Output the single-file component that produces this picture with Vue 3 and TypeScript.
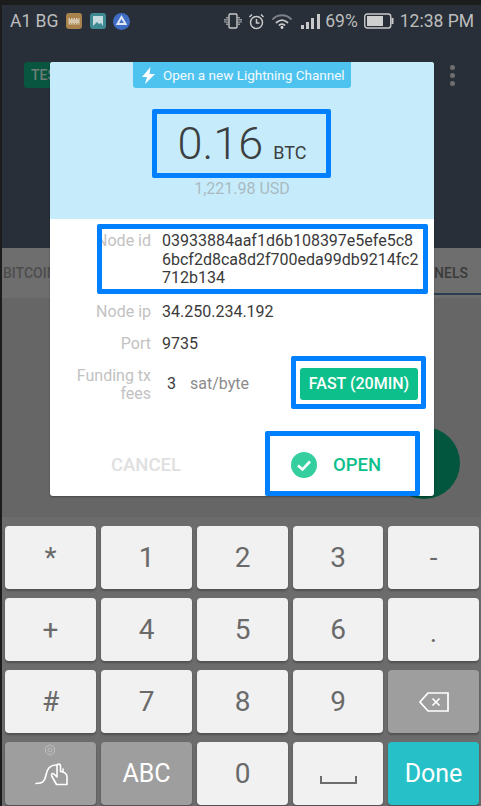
<script setup lang="ts">
interface Key { label: string; kind: 'light' | 'dark' | 'done' }
const digitRows: Key[] = ['*', '1', '2', '3', '-', '+', '4', '5', '6', '.', '#', '7', '8', '9'].map((label) => ({ label, kind: 'light' }));
</script>

<template>
  <div class="phone">
    <div class="topline"></div>
    <div class="screen">
      <div class="dark-head">
        <div class="status">
          <span class="carrier">A1 BG</span>
          <svg class="nicon" width="16" height="16" viewBox="0 0 16 16"><rect width="16" height="16" rx="3" fill="#a9824b"/><rect x="2.500" y="5" width="11" height="6.500" fill="#d8c9ae"/><path d="M4.500 5v1.500M7 5v1.500M9.500 5v1.500M12 5v1.500M4.500 10v1.500M7 10v1.500M9.500 10v1.500M12 10v1.500" stroke="#a9824b"/></svg>
          <svg class="nicon n2" width="16" height="16" viewBox="0 0 16 16"><rect width="16" height="16" rx="3" fill="#3f8a92"/><rect x="3" y="3" width="10" height="10" fill="#c4dcdf"/><path d="M3 13l4-4 2 2 2-1 2 3z" fill="#3f8a92"/></svg>
          <svg class="nicon n3" width="17" height="17" viewBox="0 0 17 17"><circle cx="8.500" cy="8.500" r="8.500" fill="#3f6dc4"/><path d="M8.500 4L12.500 11H4.500z" fill="none" stroke="#dfe6f5" stroke-width="2"/></svg>
          <span class="spacer"></span>
          <svg width="18" height="16" viewBox="0 0 18 16" fill="none" stroke="#c9c9c9" stroke-width="1.400"><rect x="5" y="1" width="8" height="14" rx="1.200"/><path d="M3 4v8M1 6v4M15 4v8M17 6v4" stroke-dasharray="1.400 .8"/></svg>
          <svg class="si" width="17" height="17" viewBox="0 0 17 17" fill="none" stroke="#c9c9c9" stroke-width="1.500"><circle cx="8.500" cy="9.500" r="6"/><path d="M8.500 6v4h3M1.500 4L4 1.500M15.500 4L13 1.500"/></svg>
          <svg class="si2" width="22" height="16" viewBox="0 0 22 16" fill="none" stroke-linecap="round"><path d="M2 6c5-5 13-5 18 0" stroke="#7c8087" stroke-width="1.800"/><path d="M5.500 9.500c3.500-3 7.500-3 11 0" stroke="#c9c9c9" stroke-width="1.800"/><path d="M8.500 12c1.500-1 3.500-1 5 0" stroke="#c9c9c9" stroke-width="1.800"/><circle cx="11" cy="14.500" r="1.400" fill="#e0e0e0"/></svg>
          <svg class="si3" width="19" height="16" viewBox="0 0 19 16" fill="#c9c9c9"><rect x="0" y="12" width="3" height="4"/><rect x="5" y="9" width="3" height="7"/><rect x="10" y="5" width="3" height="11"/><rect x="16" y="1" width="3" height="15"/></svg>
          <span class="pct">69%</span>
          <svg class="si4" width="30" height="16" viewBox="0 0 30 16"><rect x=".75" y="1" width="26" height="14" rx="2.500" fill="none" stroke="#c9c9c9" stroke-width="1.400"/><rect x="3" y="3" width="16" height="10" fill="#cfcfcf"/><rect x="27.500" y="5" width="2" height="6" fill="#c9c9c9"/></svg>
          <span class="time">12:38 PM</span>
        </div>
        <div class="appbar">
          <span class="test">TESTNET</span>
          <span class="dots"><i></i><i></i><i></i></span>
        </div>
      </div>
      <div class="tabs">
        <span class="tab-l">BITCOIN</span>
        <span class="tab-r">CHANNELS</span>
      </div>
      <div class="content"></div>
      <div class="fab"></div>
      <div class="keyboard">
        <button v-for="k in digitRows" :key="k.label" class="key" :class="[k.kind, { low: k.label === '.' }]">{{ k.label }}</button>
        <button class="key dark" aria-label="backspace">
          <svg width="30" height="20" viewBox="0 0 30 20" fill="none" stroke="#fff" stroke-width="1.700"><path d="M9 1h20v18H9L1 10z"/><path d="M13.500 6.500l7 7M20.500 6.500l-7 7"/></svg>
        </button>
        <button class="key dark gesture" aria-label="gesture">
          <svg class="gear" width="12" height="12" viewBox="0 0 12 12" fill="none" stroke="#bdbdbd" stroke-width="1"><path d="M6 .8l4.500 2.600v5.200L6 11.200 1.500 8.600V3.400z"/><circle cx="6" cy="6" r="2"/></svg>
          <svg class="hand" width="33" height="24" viewBox="0 0 33 24" fill="none" stroke="#fff" stroke-width="1.600" stroke-linecap="round" stroke-linejoin="round"><path d="M1 21.500C8 21.500 10 19 11 13S15 2.500 22 3"/><path d="M21.500 22.500L17 14.500C15.500 12 17.500 10.500 19.500 12.500L22 15V4C22 1.500 25.500 1.500 25.500 4V9.500C29.500 10 32 12 32 15V22.500Z"/><path d="M28 10v-3"/></svg>
        </button>
        <button class="key dark abc">ABC</button>
        <button class="key light">0</button>
        <button class="key light" aria-label="space">
          <svg class="space" width="37" height="8" viewBox="0 0 37 8" fill="none" stroke="#6d6d6d" stroke-width="2"><path d="M1 0v7h35V0"/></svg>
        </button>
        <button class="key done">Done</button>
      </div>
    </div>

    <div class="modal">
      <div class="m-head">
        <div class="pill">
          <svg width="13" height="17" viewBox="0 0 13 17" fill="#fff"><path d="M8.500 0L0 10h5l-2 7 10-10H7.500z"/></svg>
          <span>Open a new Lightning Channel</span>
        </div>
        <div class="amount"><span class="num">0.16</span><span class="unit">BTC</span></div>
        <div class="usd">1,221.98 USD</div>
      </div>
      <div class="m-body">
        <div class="row node">
          <span class="lbl">Node id</span>
          <span class="val">03933884aaf1d6b108397e5efe5c8<br>6bcf2d8ca8d2f700eda99db9214fc2<br>712b134</span>
        </div>
        <div class="row ip"><span class="lbl">Node ip</span><span class="val">34.250.234.192</span></div>
        <div class="row port"><span class="lbl">Port</span><span class="val">9735</span></div>
        <div class="row fee">
          <span class="lbl">Funding tx<br>fees</span>
          <span class="feeval">3</span>
          <span class="feeunit">sat/byte</span>
          <span class="fast">FAST (20MIN)</span>
        </div>
      </div>
      <div class="m-foot">
        <span class="cancel">CANCEL</span>
        <span class="open">
          <svg width="26" height="26" viewBox="0 0 26 26"><circle cx="13" cy="13" r="13" fill="#35cf9f"/><path d="M7 13.500l4.500 4L19 9.500" fill="none" stroke="#fff" stroke-width="2.600"/></svg>
          <span>OPEN</span>
        </span>
      </div>
    </div>

    <div class="mark m-amount"></div>
    <div class="mark m-node"></div>
    <div class="mark m-fast"></div>
    <div class="mark m-open"></div>
  </div>
</template>

<style>
html, body { margin: 0; padding: 0; background: #1c1c1c; }
</style>

<style scoped>
.phone {
  position: relative;
  width: 481px;
  height: 806px;
  overflow: hidden;
  background: #1c1c1c;
  font-family: Roboto, "Liberation Sans", sans-serif;
}
.topline { height: 5px; background: #1c1c1c; }
.screen {
  position: relative;
  margin-left: 2px;
  height: 801px;
  display: flex;
  flex-direction: column;
  background: #666;
  overflow: hidden;
}
.dark-head { height: 243px; background: #282f38; flex: none; }
.status {
  height: 32px;
  display: flex;
  align-items: center;
  padding: 0 7px 0 8px;
  color: #bdbdbd;
  font-size: 17.500px;
}
.nicon { margin-left: 8px; }
.n3 { margin-left: 7px; }
.spacer { flex: 1; }
.si { margin-left: 6px; }
.si2 { margin-left: 6px; }
.si3 { margin-left: 8px; }
.pct { margin-left: 5px; }
.si4 { margin-left: 6px; }
.time { margin-left: 6px; }
.appbar {
  display: flex;
  align-items: center;
  justify-content: space-between;
  margin-top: 25px;
  padding: 0 26px 0 22px;
  height: 26px;
}
.test {
  width: 68px;
  height: 26px;
  box-sizing: border-box;
  padding-left: 7px;
  line-height: 26px;
  background: #08563f;
  border-radius: 3px;
  color: #6f7d78;
  font-size: 14px;
  font-weight: 500;
  overflow: hidden;
}
.dots { display: flex; flex-direction: column; gap: 3px; }
.dots i { width: 5px; height: 5px; border-radius: 50%; background: #6f6f6f; }
.tabs {
  flex: none;
  height: 50px;
  box-sizing: border-box;
  display: flex;
  justify-content: space-between;
  align-items: center;
  padding: 0 13px 0 1px;
  background: #6e6e6e;
  color: #4d4d4d;
  font-size: 14px;
  font-weight: 500;
}
.tab-r { color: #3a3a3a; position: relative; }
.tab-r::after { content: ""; position: absolute; left: -30px; right: -13px; bottom: -14px; height: 2px; background: #2c3d52; }
.content { flex: 1; background: #666; }
.fab {
  position: absolute;
  left: 386px;
  top: 422px;
  width: 72px;
  height: 72px;
  border-radius: 50%;
  background: #03563e;
}
.keyboard {
  flex: none;
  height: 289px;
  box-sizing: border-box;
  padding: 9px 2px 0 3px;
  background: #6c6c6c;
  display: grid;
  grid-template-columns: 91px 91px 91px 90px 91px;
  grid-auto-rows: 63px;
  column-gap: 5px;
  row-gap: 9px;
}
.key {
  border: 0;
  padding: 0;
  margin: 0;
  border-radius: 4px;
  display: flex;
  align-items: center;
  justify-content: center;
  font-family: inherit;
  font-size: 28px;
  box-shadow: 0 2px 2px rgba(0, 0, 0, .25);
}
.light { background: #f1f1f1; color: #6a6a6a; }
.dark { background: #9e9e9e; color: #fff; }
.done { background: #26c0c8; color: #fff; font-size: 25px; }
.abc { font-size: 25px; }
.low { padding-top: 6px; }
.gesture { position: relative; }
.gear { position: absolute; left: 39px; top: 2px; }
.hand { margin-top: 0; margin-left: 1px; }
.space { margin-top: 12px; }

.modal {
  position: absolute;
  left: 50px;
  top: 62px;
  width: 384px;
  height: 434px;
  background: #fff;
  border-radius: 3px;
  overflow: hidden;
  box-shadow: 0 1px 2px rgba(0, 0, 0, .3);
  display: flex;
  flex-direction: column;
}
.m-head {
  flex: none;
  height: 157px;
  background: #c6ecfb;
  display: flex;
  flex-direction: column;
  align-items: center;
}
.pill {
  width: 218px;
  height: 26px;
  box-sizing: border-box;
  background: #4fc3f0;
  border-radius: 0 0 3px 3px;
  display: flex;
  align-items: center;
  padding-left: 9px;
  gap: 8px;
  color: #f4fbfe;
  font-size: 13.500px;
  white-space: nowrap;
}
.amount {
  margin-top: 27px;
  display: flex;
  align-items: baseline;
  justify-content: center;
  gap: 10px;
  color: #3c3f42;
  height: 58px;
  line-height: 58px;
}
.num { font-size: 45px; font-weight: 300; }
.unit { font-size: 18px; }
.usd { margin-top: 6px; font-size: 16px; color: #a9bac2; }
.m-body { flex: 1; position: relative; }
.row { display: grid; grid-template-columns: 101px 1fr; column-gap: 11px; font-size: 16px; line-height: 18.700px; }
.lbl { text-align: right; color: #c2c2c2; white-space: nowrap; }
.val { color: #3a3a3a; white-space: nowrap; }
.node { padding-top: 13px; }
.ip { margin-top: 15px; }
.port { margin-top: 13px; }
.fee {
  margin-top: 12px;
  grid-template-columns: 101px auto auto 1fr;
  align-items: center;
}
.fee .lbl { padding-top: 1px; margin-bottom: -1px; }
.feeval { color: #3a3a3a; margin-left: 5px; }
.feeunit { color: #8b8b8b; margin-left: 3px; }
.fast {
  justify-self: end;
  margin-right: 16px;
  width: 118px;
  height: 32px;
  line-height: 32px;
  text-align: center;
  background: #0dbf8a;
  color: #fff;
  border-radius: 3px;
  font-weight: 500;
  font-size: 16px;
}
.m-foot {
  flex: none;
  height: 64px;
  box-sizing: border-box;
  padding-top: 2px;
  display: flex;
  align-items: center;
  font-size: 18.500px;
  font-weight: 500;
}
.cancel { margin-left: 61px; color: #e0e0e0; }
.open { margin-left: 110px; display: flex; align-items: center; gap: 16px; color: #0dbf8a; }

.mark {
  position: absolute;
  box-sizing: border-box;
  border: 5px solid #007fff;
  border-radius: 2px;
  pointer-events: none;
}
.m-amount { left: 152px; top: 109px; width: 179px; height: 69px; }
.m-node { left: 97px; top: 224px; width: 331px; height: 70px; }
.m-fast { left: 291px; top: 356px; width: 135px; height: 53px; }
.m-open { left: 265px; top: 431px; width: 155px; height: 65px; }
</style>
